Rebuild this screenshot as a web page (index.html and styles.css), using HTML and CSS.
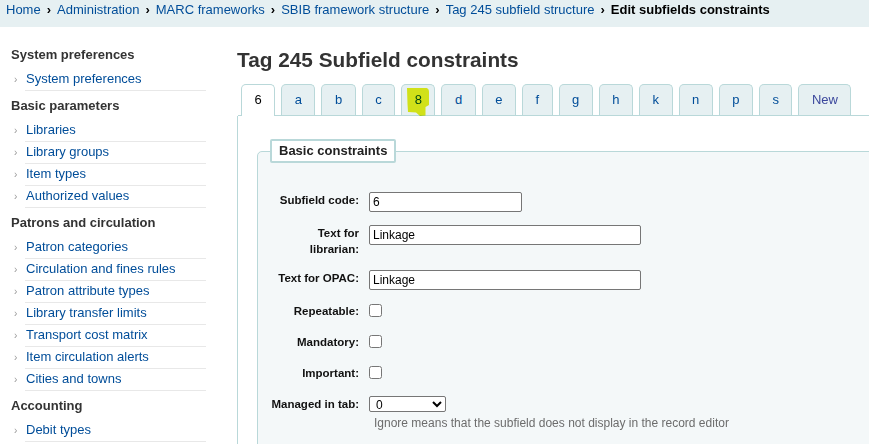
FILE: index.html
```html
<!DOCTYPE html>
<html lang="en">
<head>
<meta charset="UTF-8">
<meta name="viewport" content="width=device-width,initial-scale=1">
<title>Edit subfields constraints</title>
<link rel="stylesheet" href="styles.css">
</head>
<body>
<nav class="crumbs">
<a href="#">Home</a><span class="sep">›</span><a href="#">Administration</a><span class="sep">›</span><a href="#">MARC frameworks</a><span class="sep">›</span><a href="#">SBIB framework structure</a><span class="sep">›</span><a href="#">Tag 245 subfield structure</a><span class="sep">›</span><span class="current">Edit subfields constraints</span>
</nav>

<div class="page">
<aside class="menu">
<h5>System preferences</h5>
<ul>
<li><a href="#">System preferences</a></li>
</ul>
<h5>Basic parameters</h5>
<ul>
<li><a href="#">Libraries</a></li>
<li><a href="#">Library groups</a></li>
<li><a href="#">Item types</a></li>
<li><a href="#">Authorized values</a></li>
</ul>
<h5>Patrons and circulation</h5>
<ul>
<li><a href="#">Patron categories</a></li>
<li><a href="#">Circulation and fines rules</a></li>
<li><a href="#">Patron attribute types</a></li>
<li><a href="#">Library transfer limits</a></li>
<li><a href="#">Transport cost matrix</a></li>
<li><a href="#">Item circulation alerts</a></li>
<li><a href="#">Cities and towns</a></li>
</ul>
<h5>Accounting</h5>
<ul>
<li><a href="#">Debit types</a></li>
</ul>
</aside>

<main class="main">
<h1>Tag 245 Subfield constraints</h1>
<ul class="tabs">
<li class="active"><a href="#">6</a></li>
<li><a href="#">a</a></li>
<li><a href="#">b</a></li>
<li><a href="#">c</a></li>
<li class="marked"><a href="#">8</a>
<svg class="mark" viewBox="0 0 35 34" width="35" height="34"><path d="M6 4 L25.5 4 Q28 4.5 28 8 L28 21 L24.5 23 L24.5 31.5 L19 32 L15 28.5 L7 28 L6.5 20 Z" fill="#e8f01a"/></svg>
</li>
<li><a href="#">d</a></li>
<li><a href="#">e</a></li>
<li><a href="#">f</a></li>
<li><a href="#">g</a></li>
<li><a href="#">h</a></li>
<li><a href="#">k</a></li>
<li><a href="#">n</a></li>
<li><a href="#">p</a></li>
<li><a href="#">s</a></li>
<li class="new"><a href="#">New</a></li>
</ul>

<div class="panel">
<fieldset>
<legend>Basic constraints</legend>
<ol class="rows">
<li><label>Subfield code:</label><input type="text" class="short" value="6"></li>
<li><label>Text for librarian:</label><input type="text" class="long" value="Linkage"></li>
<li><label>Text for OPAC:</label><input type="text" class="long" value="Linkage"></li>
<li><label>Repeatable:</label><input type="checkbox"></li>
<li><label>Mandatory:</label><input type="checkbox"></li>
<li><label>Important:</label><input type="checkbox"></li>
<li><label>Managed in tab:</label>
<div class="field">
<select><option>0</option><option>ignore</option><option>1</option></select>
<div class="hint">Ignore means that the subfield does not display in the record editor</div>
</div>
</li>
</ol>
</fieldset>
</div>
</main>
</div>
</body>
</html>
```

FILE: styles.css
```css
html{overflow:hidden}
body{margin:0;font-family:"Liberation Sans",Arial,sans-serif;font-size:13px;color:#000;background:#fff}
a{color:#004d99;text-decoration:none}

.crumbs{background:#e6f0f2;padding:2px 6px 9px;line-height:16px;white-space:nowrap}
.crumbs .sep{font-weight:bold;margin:0 6px;color:#000}
.crumbs .current{font-weight:bold}

.page{display:flex;width:1000px}
.menu{flex:none;width:195px;padding:13px 0 0 11px}
.menu h5{margin:0;padding:6px 0 5px;font-size:13px;line-height:18px;color:#333}
.menu ul{list-style:none;margin:0 0 0 14px;padding:0}
.menu li{height:16px;padding:2px 0 3px 1px;line-height:16px;border-bottom:1px solid #e8e8e8}
.menu li::before{content:"›";display:inline-block;vertical-align:top;width:12px;margin-left:-12px;padding-top:1px;font-size:10px;line-height:15px;color:#999}

.main{flex:none;width:700px;margin-left:31px}
.main h1{margin:20px 0 11px;font-size:20.8px;line-height:26px;color:#333}

.tabs{display:flex;gap:6px;list-style:none;margin:0 0 0 1px;padding:0 0 0 3px;border-bottom:1px solid #b9d8d9}
.tabs li{position:relative}
.tabs a{display:block;padding:0 12.5px;line-height:30px;border:1px solid #b9d8d9;border-bottom:0;border-radius:5px 5px 0 0;background:#e6f0f2}
.tabs .active a{background:#fff;color:#000;margin-bottom:-1px;padding-bottom:1px}
.tabs .new a{color:#3b479c}
.tabs .mark{position:absolute;left:0;top:0;mix-blend-mode:multiply;pointer-events:none}

.panel{border-left:1px solid #b9d8d9;padding:23px 0 0 19px;height:400px}
fieldset{margin:0;padding:29px 0 20px 12px;border:1px solid #b9d8d9;border-radius:5px;background:#f4f8f9}
legend{padding:2px 7px;border:2px solid #b9d8d9;border-radius:2px;background:#fff;font-weight:bold;font-size:13px;line-height:16px;color:#222}

.rows{list-style:none;margin:0;padding:0}
.rows li{display:flex;align-items:flex-start;margin-bottom:13px}
.rows label{flex:none;width:89px;margin-right:10px;text-align:right;font-weight:bold;font-size:11.5px;line-height:16px;color:#111}
.rows input[type=text]{box-sizing:border-box;height:20px;margin:0;padding:0 3px;border:1px solid #767676;border-radius:2px;font:12px "Liberation Sans",Arial,sans-serif;background:#fff}
.rows .short{width:153px}
.rows .long{width:272px}
.rows input[type=checkbox]{width:13px;height:13px;margin:1px 0 4px}
.rows select{box-sizing:border-box;width:77px;height:16px;margin:0;padding:0 2px;border:1px solid #767676;border-radius:2px;font:12px "Liberation Sans",Arial,sans-serif;background:#fff}
.field{display:flex;flex-direction:column;align-items:flex-start}
.hint{margin:3px 0 0 5px;font-size:12px;line-height:16px;color:#6c6c6c;white-space:nowrap}
```
